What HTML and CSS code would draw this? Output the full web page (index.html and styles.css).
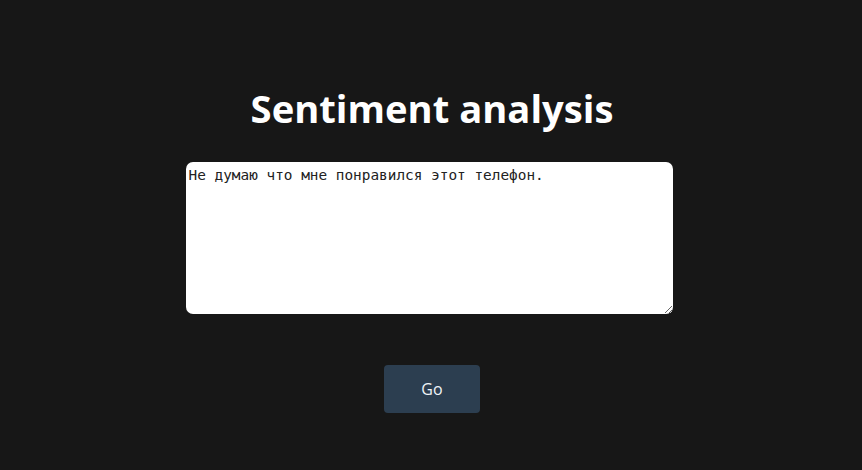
FILE: index.html
```html
<!DOCTYPE html>
<html>
<head>
<meta charset="utf-8">
<link rel="stylesheet" href="styles.css">
</head>
<body>
<main class="app">
  <h1 class="title">Sentiment analysis</h1>
  <textarea class="input">Не думаю что мне понравился этот телефон.</textarea>
  <button class="go">Go</button>
</main>
</body>
</html>
```
FILE: styles.css
```css
html, body {
  margin: 0;
  padding: 0;
  background: #171717;
  height: 100%;
}
.app {
  display: flex;
  flex-direction: column;
  align-items: center;
  padding-top: 82px;
  font-family: "Open Sans", sans-serif;
}
.title {
  margin: 0 0 0 2px;
  color: #ffffff;
  font-size: 38.2px;
  font-weight: 700;
  line-height: 52px;
}
.input {
  margin: 28px 4px 0 0;
  width: 487px;
  height: 152px;
  box-sizing: border-box;
  border: none;
  border-radius: 7px;
  background: #ffffff;
  padding: 4px 3px;
  font-family: "DejaVu Sans Mono", monospace;
  font-size: 14.4px;
  line-height: 18px;
  color: #222;
  resize: vertical;
  outline: none;
}
.go {
  margin: 51px 0 0 2px;
  width: 96px;
  height: 48px;
  border: none;
  border-radius: 4px;
  background: #2c3e50;
  color: #f0f4f8;
  font-family: "Open Sans", sans-serif;
  font-size: 16px;
}
```
